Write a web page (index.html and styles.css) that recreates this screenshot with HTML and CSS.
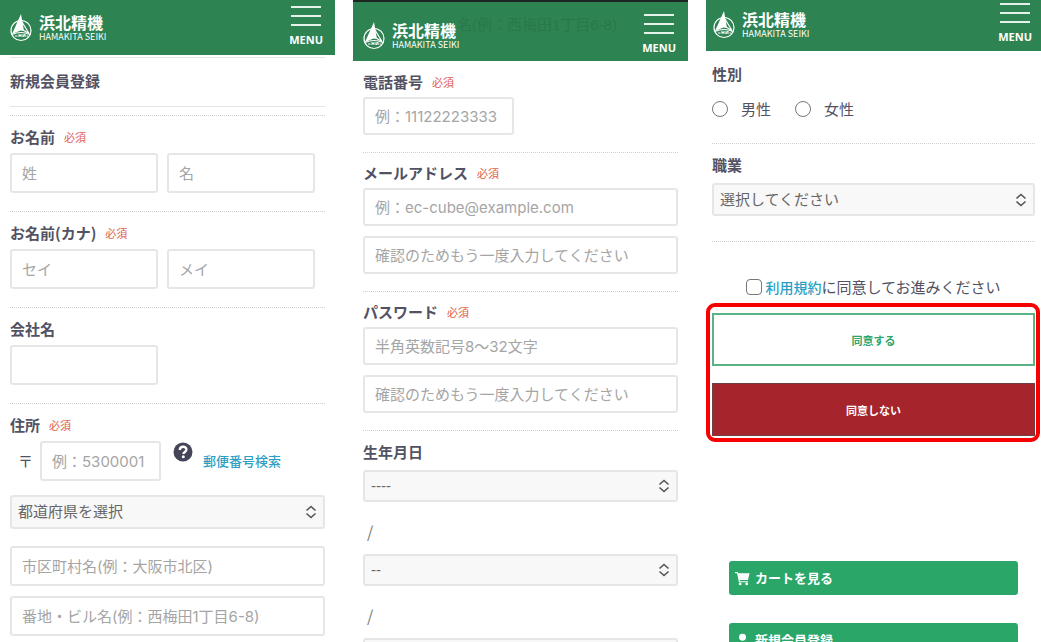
FILE: index.html
```
<!DOCTYPE html>
<html lang="ja">
<head>
<meta charset="utf-8">
<title>新規会員登録 | 浜北精機</title>
<meta name="viewport" content="width=device-width, initial-scale=1">
<link rel="stylesheet" href="styles.css">
</head>
<body>
<svg class="defs" aria-hidden="true">
  <symbol id="mark" viewBox="0 0 24 28">
    <circle cx="12" cy="16.500" r="10" fill="none" stroke="currentColor" stroke-width="1.200"/>
    <path d="M12 0 L3 20 L11.500 16.500 L15 17 Z" fill="currentColor"/>
    <path d="M13 8 L20 19.500 L14 16" fill="none" stroke="currentColor" stroke-width="1.200"/>
    <path d="M3 20.500 Q12 16.500 21 20.500" fill="none" stroke="currentColor" stroke-width="1.200"/>
    <path d="M6 22h2.500M10 20v3M12 20v3M10 21.500h2M14 20v3l2-3v3M17.500 22h1.500" fill="none" stroke="currentColor" stroke-width="1"/>
  </symbol>
  <symbol id="updown" viewBox="0 0 12 14">
    <path d="M1.500 5.500 6 1.500l4.500 4M1.500 8.500 6 12.500l4.500-4" fill="none" stroke="currentColor" stroke-width="1.600"/>
  </symbol>
</svg>
<main class="screens">
  <section class="screen">
    <header class="bar bar-a">
      <a class="logo" href="#"><svg class="mark"><use href="#mark"/></svg><span class="brand"><span class="brand-ja">浜北精機</span><span class="brand-en">HAMAKITA SEIKI</span></span></a>
      <button class="menu" type="button"><span class="line"></span><span class="line"></span><span class="line"></span><span class="menu-text">MENU</span></button>
    </header>
    <form class="form form-a">
      <h1 class="title">新規会員登録</h1>
      <div class="group">
        <div class="label"><label for="sei">お名前</label><span class="req">必須</span></div>
        <div class="pair"><input class="field half" id="sei" placeholder="姓"><input class="field half" aria-label="名" placeholder="名"></div>
      </div>
      <div class="group">
        <div class="label"><label for="kana">お名前(カナ)</label><span class="req">必須</span></div>
        <div class="pair"><input class="field half" id="kana" placeholder="セイ"><input class="field half" aria-label="メイ" placeholder="メイ"></div>
      </div>
      <div class="group">
        <div class="label"><label for="company">会社名</label></div>
        <input class="field half" id="company">
      </div>
      <div class="group">
        <div class="label"><label for="zip">住所</label><span class="req">必須</span></div>
        <div class="zip">
          <span class="post">〒</span>
          <input class="field zip-field" id="zip" placeholder="例：5300001">
          <svg class="help" viewBox="0 0 20 20" role="img" aria-label="ヘルプ"><circle cx="10" cy="10" r="9.500" fill="currentColor"/><path d="M6.800 8c0-4.200 6.600-4.200 6.600-.4 0 2.400-3 2.300-3 4.400" fill="none" stroke="#fff" stroke-width="2.400"/><circle cx="10.300" cy="14.800" r="1.500" fill="#fff"/></svg>
          <a class="link zip-link" href="#">郵便番号検索</a>
        </div>
        <div class="select"><select class="pick tall" aria-label="都道府県"><option>都道府県を選択</option></select><svg class="arrows"><use href="#updown"/></svg></div>
        <div class="stack">
          <input class="field" aria-label="市区町村名" placeholder="市区町村名(例：大阪市北区)">
          <input class="field" aria-label="番地・ビル名" placeholder="番地・ビル名(例：西梅田1丁目6-8)">
        </div>
      </div>
    </form>
  </section>

  <section class="screen">
    <header class="bar bar-b">
      <span class="under" aria-hidden="true">名(例：西梅田1丁目6-8)</span>
      <a class="logo" href="#"><svg class="mark"><use href="#mark"/></svg><span class="brand"><span class="brand-ja">浜北精機</span><span class="brand-en">HAMAKITA SEIKI</span></span></a>
      <button class="menu" type="button"><span class="line"></span><span class="line"></span><span class="line"></span><span class="menu-text">MENU</span></button>
    </header>
    <form class="form form-b">
      <div class="group plain">
        <div class="label"><label for="tel">電話番号</label><span class="req">必須</span></div>
        <input class="field half" id="tel" placeholder="例：11122223333">
      </div>
      <div class="group">
        <div class="label"><label for="mail">メールアドレス</label><span class="req">必須</span></div>
        <div class="column"><input class="field" id="mail" type="email" placeholder="例：ec-cube@example.com"><input class="field" aria-label="メールアドレス確認" placeholder="確認のためもう一度入力してください"></div>
      </div>
      <div class="group">
        <div class="label"><label for="pass">パスワード</label><span class="req">必須</span></div>
        <div class="column"><input class="field" id="pass" type="password" placeholder="半角英数記号8〜32文字"><input class="field" type="password" aria-label="パスワード確認" placeholder="確認のためもう一度入力してください"></div>
      </div>
      <div class="group birth">
        <div class="label"><label for="year">生年月日</label></div>
        <div class="select"><select class="pick" id="year"><option>----</option></select><svg class="arrows"><use href="#updown"/></svg></div>
        <div class="slash">/</div>
        <div class="select"><select class="pick" aria-label="月"><option>--</option></select><svg class="arrows"><use href="#updown"/></svg></div>
        <div class="slash">/</div>
        <div class="select"><select class="pick" aria-label="日"><option>--</option></select><svg class="arrows"><use href="#updown"/></svg></div>
      </div>
    </form>
  </section>

  <section class="screen">
    <header class="bar bar-c">
      <a class="logo" href="#"><svg class="mark"><use href="#mark"/></svg><span class="brand"><span class="brand-ja">浜北精機</span><span class="brand-en">HAMAKITA SEIKI</span></span></a>
      <button class="menu" type="button"><span class="line"></span><span class="line"></span><span class="line"></span><span class="menu-text">MENU</span></button>
    </header>
    <form class="form form-c">
      <fieldset class="group plain gender">
        <legend class="label">性別</legend>
        <div class="radios">
          <label class="option"><input class="radio" type="radio" name="sex">男性</label>
          <label class="option"><input class="radio" type="radio" name="sex">女性</label>
        </div>
      </fieldset>
      <div class="group job">
        <div class="label"><label for="job">職業</label></div>
        <div class="select"><select class="pick" id="job"><option>選択してください</option></select><svg class="arrows"><use href="#updown"/></svg></div>
      </div>
      <div class="terms">
        <input class="check" type="checkbox" id="agree"><a class="link" href="#">利用規約</a><label for="agree">に同意してお進みください</label>
      </div>
      <div class="choices">
        <button class="choice yes" type="submit">同意する</button>
        <button class="choice no" type="button">同意しない</button>
      </div>
    </form>
    <nav class="links">
      <a class="nav-link" href="#"><svg class="icon" viewBox="0 0 16 16"><path d="M0 1h3l.5 1.500H15.500L13.800 9.500H5l.3 1.300H14V12H4.200L2.200 2.300H0z" fill="currentColor"/><circle cx="5.500" cy="13.800" r="1.500" fill="currentColor"/><circle cx="12.500" cy="13.800" r="1.500" fill="currentColor"/></svg>カートを見る</a>
      <a class="nav-link" href="#"><svg class="icon" viewBox="0 0 16 16"><circle cx="8" cy="4.500" r="3.700" fill="currentColor"/><path d="M1.500 16c0-4.500 2-6.500 4-6.500h5c2 0 4 2 4 6.500z" fill="currentColor"/></svg>新規会員登録</a>
    </nav>
  </section>
</main>
</body>
</html>
```
FILE: styles.css
```
* { box-sizing: border-box; }
body {
  margin: 0;
  background: #fff;
  color: #525263;
  font-family: "Noto Sans CJK JP", "Noto Sans", sans-serif;
  font-size: 15px;
  line-height: 24px;
}
.defs { display: none; }
.screens {
  display: grid;
  grid-template-columns: repeat(3, minmax(0, 1fr));
  gap: 18px;
  height: 100vh;
  overflow: hidden;
}
.screen { overflow: hidden; }

/* header */
.bar {
  position: relative;
  display: flex;
  justify-content: space-between;
  align-items: center;
  background: #2e8352;
  color: #fff;
}
.bar-a { padding: 6px 12px 7px 9px; }
.bar-b { padding: 12px 12px 5px 9px; border-top: 2px solid #1d2622; }
.bar-c { padding: 3px 9px 6px 6px; }
.under {
  position: absolute;
  left: 104px;
  top: 11px;
  color: #297849;
  font-family: "Liberation Sans", "Noto Sans CJK JP", sans-serif;
  white-space: nowrap;
}
.logo {
  position: relative;
  display: flex;
  align-items: center;
  gap: 6px;
  padding-top: 1px;
  color: inherit;
  text-decoration: none;
}
.mark { width: 24px; height: 28px; }
.brand { display: flex; flex-direction: column; font-weight: 700; }
.brand-ja { font-size: 16px; line-height: 18px; }
.brand-en { font-weight: 400; font-size: 9px; line-height: 11px; }
.menu {
  display: flex;
  flex-direction: column;
  align-items: center;
  gap: 7px;
  padding: 0;
  border: 0;
  background: none;
  color: inherit;
}
.line { width: 30px; height: 2px; background: #e4f2e9; }
.menu-text { font: 700 11px/16px "Open Sans", sans-serif; margin-top: -1px; }

/* forms */
.form-a { padding: 2px 10px 0; --field: 40px; }
.form-b { padding: 0 10px; --field: 38px; }
.form-c { padding: 0 6px; }
.title {
  margin: 0 0 8px;
  padding: 11px 0 13px;
  border-top: 1px solid #e4e4e4;
  border-bottom: 1px solid #e4e4e4;
  font-size: 15px;
  line-height: 24px;
}
.group {
  margin: 0;
  padding: 9px 0 18px;
  border: 0;
  border-top: 1px dotted #d0d0d0;
}
.form-b .group { padding: 8px 0 17px; }
.form-b .plain { border-top: 0; padding-top: 9px; }
.label {
  display: flex;
  align-items: center;
  gap: 9px;
  padding: 0;
  margin-bottom: 4px;
  font-weight: 700;
}
.form-b .label { margin-bottom: 3px; }
.req { color: #de5d50; font-size: 11px; font-weight: 400; }
.pair { display: flex; gap: 9px; }
.column { display: flex; flex-direction: column; gap: 10px; }
.stack { display: flex; flex-direction: column; gap: 10px; margin-top: 17px; }
.field, .pick {
  display: block;
  width: 100%;
  border: 2px solid #e6e6e6;
  border-radius: 3px;
  background: #fff;
  color: #525263;
  font: 15px/20px Inter, "Noto Sans CJK JP", sans-serif;
}
.field { height: var(--field); padding: 0 10px; }
.field::placeholder { color: #a5a5a5; opacity: 1; }
.half { width: 47%; }
.form-b .half { width: 48%; }
.zip { display: flex; align-items: center; margin-bottom: 14px; padding-left: 8px; }
.post { width: 22px; }
.zip-field { width: 121px; }
.help { width: 20px; height: 20px; margin: 0 10px 18px 12px; color: #45455a; }
.link { color: #2a9fc4; text-decoration: none; }
.zip-link { font-size: 13px; font-weight: 500; line-height: 20px; }
.select { position: relative; }
.pick {
  height: 32px;
  padding: 0 6px;
  appearance: none;
  background: #f8f8f8;
  color: #666;
  font-family: "Liberation Sans", "Noto Sans CJK JP", sans-serif;
}
.tall { height: 34px; }
.arrows {
  position: absolute;
  right: 8px;
  top: 50%;
  width: 12px;
  height: 14px;
  margin-top: -7px;
  color: #555;
  pointer-events: none;
}
.form-b .birth { padding-top: 9px; }
.form-b .birth .label { margin-bottom: 6px; }
.slash { padding: 17px 4px 11px; font-size: 16px; color: #777; }

/* last screen */
.gender { padding: 0 0 22px; }
.plain { border-top: 0; }
.gender .label { padding-top: 11px; margin-bottom: 11px; }
.radios { display: flex; gap: 24px; }
.option { display: flex; align-items: center; gap: 13px; }
.radio, .check {
  appearance: none;
  width: 16px;
  height: 16px;
  margin: 0;
  border: 1px solid #777;
  background: #fff;
}
.radio { border-radius: 50%; }
.job { padding-bottom: 25px; }
.job .label { margin-bottom: 6px; }
.job .pick { height: 33px; }
.terms {
  display: flex;
  justify-content: center;
  align-items: center;
  padding: 33px 0 4px;
  border-top: 1px dotted #d0d0d0;
}
.terms .link { font-size: 14px; font-weight: 500; }
.check { border-radius: 4px; margin-right: 3px; }
.choices {
  display: flex;
  flex-direction: column;
  gap: 17px;
  margin: 0 -5px 0 -6px;
  padding: 6px 1px 2px 2px;
  border: 4px solid #f80000;
  border-radius: 9px;
}
.choice {
  height: 53px;
  font: 700 11px/16px "Noto Sans CJK JP", sans-serif;
}
.yes { border: 2px solid #5cb287; background: #fff; color: #2ba56a; }
.no { border: 1px solid #704047; background: #a6242b; color: #fff; }
.links {
  display: flex;
  flex-direction: column;
  gap: 28px;
  padding: 119px 23px 0;
}
.nav-link {
  display: flex;
  align-items: center;
  gap: 5px;
  height: 34px;
  padding: 0 6px;
  border-radius: 3px;
  background: #29a668;
  color: #fff;
  font-size: 13px;
  font-weight: 700;
  text-decoration: none;
}
.icon { width: 15px; height: 15px; }
```
